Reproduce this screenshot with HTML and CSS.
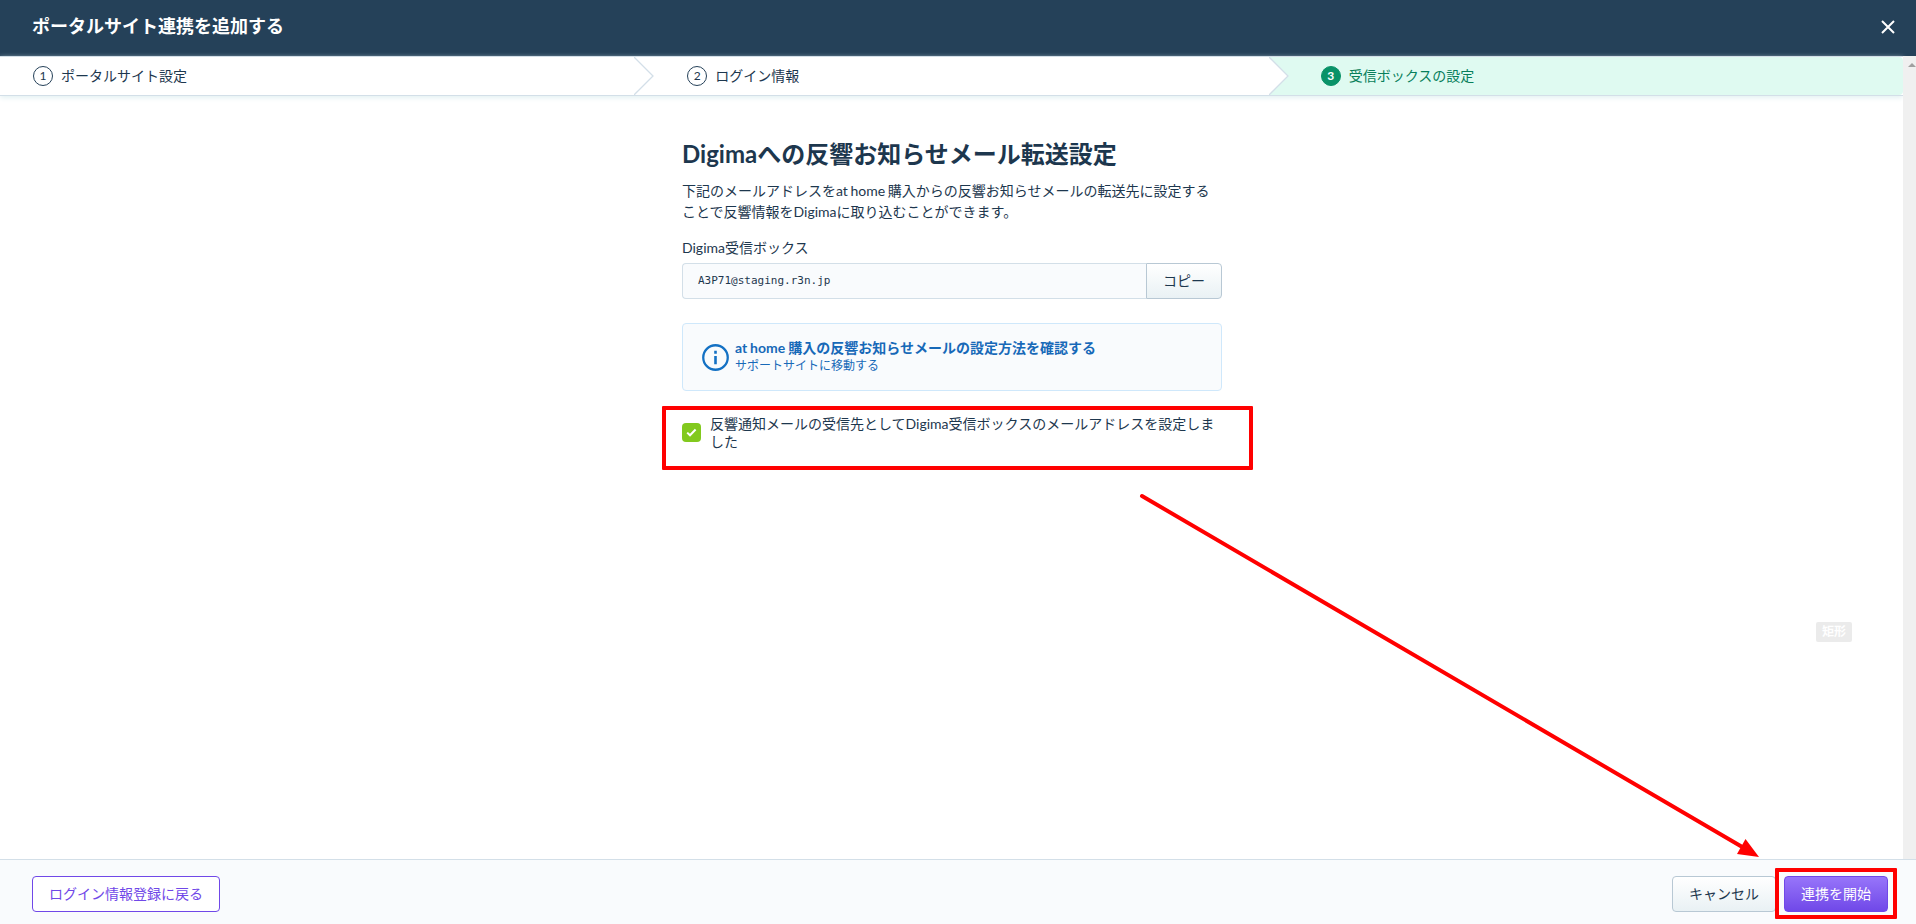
FILE: index.html
```html
<!DOCTYPE html>
<html lang="ja">
<head>
<meta charset="UTF-8">
<title>ポータルサイト連携を追加する</title>
<link rel="stylesheet" href="styles.css">
</head>
<body>

<header class="header">
    <h1>ポータルサイト連携を追加する</h1>
    <button class="close" aria-label="閉じる">
        <svg width="14" height="14" viewBox="0 0 14 14"><path d="M1 1l12 12M13 1L1 13" fill="none" stroke="#fff" stroke-width="2"/></svg>
    </button>
</header>

<div class="body">
    <main class="main">
        <!-- ステップ -->
        <ol class="steps">
            <li class="step"><span class="num">1</span>ポータルサイト設定
                <svg class="chevron" width="21" height="38" viewBox="0 0 21 38"><path d="M0 0l19 19L0 38" fill="#fff" stroke="#d3dfe8" stroke-width="1.3"/></svg>
            </li>
            <li class="step"><span class="num">2</span>ログイン情報
                <svg class="chevron" width="21" height="38" viewBox="0 0 21 38"><path d="M0 0l19 19L0 38" fill="#fff" stroke="#d3dfe8" stroke-width="1.3"/></svg>
            </li>
            <li class="step active"><span class="num">3</span>受信ボックスの設定</li>
        </ol>

        <section class="content">
            <h2>Digimaへの反響お知らせメール転送設定</h2>
            <p class="lead">下記のメールアドレスをat home 購入からの反響お知らせメールの転送先に設定することで反響情報をDigimaに取り込むことができます。</p>

            <div class="label">Digima受信ボックス</div>
            <div class="field">
                <div class="address">A3P71@staging.r3n.jp</div>
                <button class="btn copy">コピー</button>
            </div>

            <a class="info">
                <svg width="27" height="27" viewBox="0 0 26 26"><circle cx="13" cy="13" r="11.8" fill="none" stroke="#1471c4" stroke-width="2.2"/><path d="M13 11.5v8M13 6.5v2.8" stroke="#1471c4" stroke-width="2.5"/></svg>
                <div>
                    <div class="info-title">at home 購入の反響お知らせメールの設定方法を確認する</div>
                    <div class="info-sub">サポートサイトに移動する</div>
                </div>
            </a>

            <div class="confirm">
                <span class="check"><svg width="11" height="9" viewBox="0 0 11 9"><path d="M1.2 4.6l2.8 2.7 5.6-5.8" fill="none" stroke="#fff" stroke-width="2"/></svg></span>
                <span>反響通知メールの受信先としてDigima受信ボックスのメールアドレスを設定しました</span>
                <div class="mark mark-confirm"></div>
            </div>
        </section>
    </main>
    <div class="scrollbar"></div>
</div>

<footer class="footer">
    <button class="btn outline">ログイン情報登録に戻る</button>
    <div class="actions">
        <button class="btn">キャンセル</button>
        <button class="btn primary">連携を開始</button>
        <div class="mark mark-start"></div>
    </div>
</footer>

<!-- 注釈 -->
<svg class="arrow" width="1916" height="924" viewBox="0 0 1916 924">
    <path d="M1142 496L1744 848" stroke="#f00" stroke-width="4" stroke-linecap="round"/>
    <path d="M1759 857l-13.5-18-8.500 15z" fill="#f00"/>
</svg>
<div class="tag">矩形</div>

</body>
</html>
```

FILE: styles.css
```css
* {box-sizing:border-box;}
body {
    margin:0;
    height:100vh;
    display:flex;
    flex-direction:column;
    overflow:hidden;
    font-family:Lato,"Noto Sans CJK JP",sans-serif;
    font-size:14px;
    color:#1d374e;
    background:#fff;
}
h1,h2,p,ol {margin:0;padding:0;}
button {font-family:inherit;cursor:pointer;}

.header {height:56px;flex:none;display:flex;align-items:center;justify-content:space-between;padding:0 21px 4px 32px;background:#254159;color:#fff;}
.header h1 {font-size:18px;line-height:26px;}
.close {display:flex;padding:2px 0 0;border:none;background:none;}

.body {flex:1;display:flex;min-height:0;}
.main {flex:1;}
.scrollbar {width:13px;background:#f0f0f0;padding:7px 0 0 5px;}
.scrollbar::before {content:"";display:block;width:0;border:4px solid transparent;border-top:none;border-bottom-color:#a0a0a0;}

.steps {display:flex;height:40px;list-style:none;border-top:1px solid #d3dfe8;border-bottom:1px solid #d3dfe8;box-shadow:0 2px 5px #e4f1f3;}
.step {flex:none;width:33.3333%;position:relative;display:flex;align-items:center;gap:8px;padding-left:53px;line-height:20px;}
.step:first-child {padding-left:33px;}
.num {width:20px;height:20px;border:1px solid #254159;border-radius:50%;font-size:12px;line-height:18px;text-align:center;}
.chevron {position:absolute;left:100%;top:0;z-index:1;}
.active {padding-left:52px;background:#dffaf1;color:#087f5b;border-radius:0 4px 4px 0;}
.active .num {background:#099268;border-color:#099268;color:#fff;font-weight:bold;}

.content {width:540px;margin:40px 0 0 682px;}
.content h2 {font-size:24px;line-height:36px;font-weight:bold;}
.lead {margin-top:8px;line-height:21px;word-spacing:-1px;}
.label {margin-top:15px;line-height:21px;}
.field {display:flex;height:36px;margin-top:5px;}
.address {flex:1;padding-left:15px;border:1px solid #d3dfe8;border-right:none;border-radius:4px 0 0 4px;background:#f9fbfd;font:11px/34px "DejaVu Sans Mono",monospace;}
.btn {height:36px;padding:0 16px;border:1px solid #b8c8d4;border-radius:4px;background:linear-gradient(#fff,#e9f1f4);color:#1d374e;font-size:14px;line-height:20px;}
.copy {border-radius:0 4px 4px 0;}

.info {display:flex;align-items:center;gap:6px;height:68px;margin-top:24px;padding:0 19px;border:1px solid #cfe8fb;border-radius:4px;background:#f9fbfd;color:#1769b8;}
.info-title {font-weight:bold;line-height:18px;word-spacing:-0.5px;}
.info-sub {font-size:12px;line-height:18px;}

.confirm {position:relative;display:flex;align-items:flex-start;gap:9px;margin-top:24px;line-height:18px;}
.check {flex:none;display:flex;align-items:center;justify-content:center;width:19px;height:19px;margin-top:8px;border-radius:4px;background:#82c91e;}

.footer {height:65px;flex:none;display:flex;align-items:center;justify-content:space-between;padding:4px 28px 0 32px;border-top:1px solid #d3dfe8;background:#f9fbfd;}
.actions {position:relative;display:flex;gap:8px;}
.outline {border-color:#7048e8;background:#fff;color:#7048e8;}
.primary {border-color:#7048e8;background:linear-gradient(#9775fa,#7048e8);color:#fff;}

.mark {position:absolute;border:4px solid #f00;border-radius:1px;}
.mark-confirm {left:-20px;top:-9px;width:591px;height:64px;}
.mark-start {right:-9px;top:-8px;width:122px;height:51px;}
.arrow {position:absolute;left:0;top:0;pointer-events:none;}
.tag {position:absolute;left:1816px;top:622px;width:36px;height:20px;border-radius:2px;background:#ebebeb;color:#fff;font-size:12px;font-weight:bold;line-height:19px;text-align:center;}
```
